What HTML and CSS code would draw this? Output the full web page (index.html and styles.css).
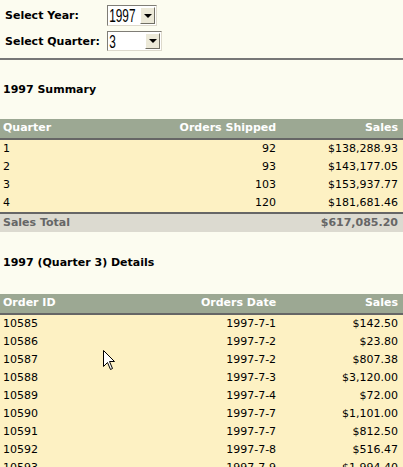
FILE: index.html
```html
<!DOCTYPE html>
<html lang="en">
<head>
    <meta charset="UTF-8">
    <meta name="viewport" content="width=device-width, initial-scale=1.0">
    <title>Sales Report</title>
    <link rel="stylesheet" href="styles.css">
</head>
<body>
    <form class="filters">
        <div class="filter-row">
            <label class="filter-label">Select Year:</label>
            <div class="dropdown dropdown-year">
                <span class="dropdown-value">1997</span>
                <span class="dropdown-btn"><span class="arrow"></span></span>
            </div>
        </div>
        <div class="filter-row">
            <label class="filter-label">Select Quarter:</label>
            <div class="dropdown dropdown-quarter">
                <span class="dropdown-value">3</span>
                <span class="dropdown-btn"><span class="arrow"></span></span>
            </div>
        </div>
    </form>
    <hr class="divider">

    <h3>1997 Summary</h3>
    <table class="report">
        <thead>
            <tr>
                <th>Quarter</th>
                <th class="num mid">Orders Shipped</th>
                <th class="num last">Sales</th>
            </tr>
        </thead>
        <tbody>
            <tr><td>1</td><td class="num">92</td><td class="num">$138,288.93</td></tr>
            <tr><td>2</td><td class="num">93</td><td class="num">$143,177.05</td></tr>
            <tr><td>3</td><td class="num">103</td><td class="num">$153,937.77</td></tr>
            <tr><td>4</td><td class="num">120</td><td class="num">$181,681.46</td></tr>
        </tbody>
        <tfoot>
            <tr><td>Sales Total</td><td></td><td class="num">$617,085.20</td></tr>
        </tfoot>
    </table>

    <h3 class="details-title">1997 (Quarter 3) Details</h3>
    <div class="details-wrap">
        <table class="report">
            <thead>
                <tr>
                    <th>Order ID</th>
                    <th class="num mid">Orders Date</th>
                    <th class="num last">Sales</th>
                </tr>
            </thead>
            <tbody>
                <tr><td>10585</td><td class="num">1997-7-1</td><td class="num">$142.50</td></tr>
                <tr><td>10586</td><td class="num">1997-7-2</td><td class="num">$23.80</td></tr>
                <tr><td>10587</td><td class="num">1997-7-2</td><td class="num">$807.38</td></tr>
                <tr><td>10588</td><td class="num">1997-7-3</td><td class="num">$3,120.00</td></tr>
                <tr><td>10589</td><td class="num">1997-7-4</td><td class="num">$72.00</td></tr>
                <tr><td>10590</td><td class="num">1997-7-7</td><td class="num">$1,101.00</td></tr>
                <tr><td>10591</td><td class="num">1997-7-7</td><td class="num">$812.50</td></tr>
                <tr><td>10592</td><td class="num">1997-7-8</td><td class="num">$516.47</td></tr>
                <tr><td>10593</td><td class="num">1997-7-9</td><td class="num">$1,994.40</td></tr>
            </tbody>
        </table>
        <svg class="cursor" width="13" height="21" viewBox="0 0 13 21">
            <path d="M0.5 0.5 L0.5 16.5 L4.5 12.5 L7.5 19.5 L9.5 18.5 L6.5 11.5 L11.5 11.5 Z" fill="#fff" stroke="#000" stroke-width="1"/>
        </svg>
    </div>
</body>
</html>
```

FILE: styles.css
```css
body {
    margin: 0;
    background-color: #fcfcf0;
    font-family: "DejaVu Sans", Verdana, sans-serif;
    font-size: 11px;
    color: #000;
}
.filters {
    padding: 5px 5px 0 5px;
    margin: 0;
}
.filter-row {
    display: flex;
    align-items: center;
    margin-bottom: 5px;
}
.filter-label {
    font-weight: bold;
    width: 102px;
}
.dropdown {
    position: relative;
    height: 21px;
    box-sizing: border-box;
    border: 1px solid #7f7d76;
    border-right-color: #ddd9cc;
    border-bottom-color: #ddd9cc;
    background: #fff;
    overflow: hidden;
}
.dropdown-year {
    width: 50px;
}
.dropdown-quarter {
    width: 55px;
    height: 20px;
}
.dropdown-value {
    display: block;
    padding-left: 2px;
    font-family: "Liberation Sans", Arial, sans-serif;
    font-size: 19px;
    line-height: 19px;
    transform: scaleX(0.62);
    transform-origin: left center;
    white-space: nowrap;
}
.dropdown-btn {
    position: absolute;
    top: 1px;
    right: 1px;
    bottom: 1px;
    width: 15px;
    background: #ece9d8;
    border: 1px solid #fff;
    border-right-color: #716f64;
    border-bottom-color: #716f64;
    box-sizing: border-box;
    display: flex;
    align-items: center;
    justify-content: center;
}
.arrow {
    width: 0;
    height: 0;
    border-left: 4px solid transparent;
    border-right: 4px solid transparent;
    border-top: 4px solid #000;
}
.divider {
    margin: 7px 0 0 0;
    border: 0;
    border-top: 2px solid #777;
    height: 0;
}
h3 {
    font-size: 11px;
    margin: 23px 3px 22px 3px;
    line-height: 14px;
}
.details-title {
    margin-top: 24px;
    margin-bottom: 24px;
}
.report {
    width: 100%;
    border-collapse: collapse;
}
.report th, .report td {
    padding: 2px 3px;
    line-height: 14px;
    text-align: left;
    white-space: nowrap;
}
.report th {
    padding-bottom: 3px;
    background-color: #9ca893;
    color: #fff;
    font-weight: bold;
    border-bottom: 2px solid #666;
}
.report td {
    background-color: #fdf1c3;
}
.report th.mid, .report td:nth-child(2) {
    padding-right: 6px;
}
.report th.last, .report td:nth-child(3) {
    width: 30%;
    padding-right: 5px;
}
.report .num {
    text-align: right;
}
.report tfoot td {
    background-color: #dcdad0;
    color: #666;
    font-weight: bold;
    border-top: 2px solid #666;
}
.details-wrap {
    position: relative;
}
.cursor {
    position: absolute;
    left: 103px;
    top: 56px;
}
```
